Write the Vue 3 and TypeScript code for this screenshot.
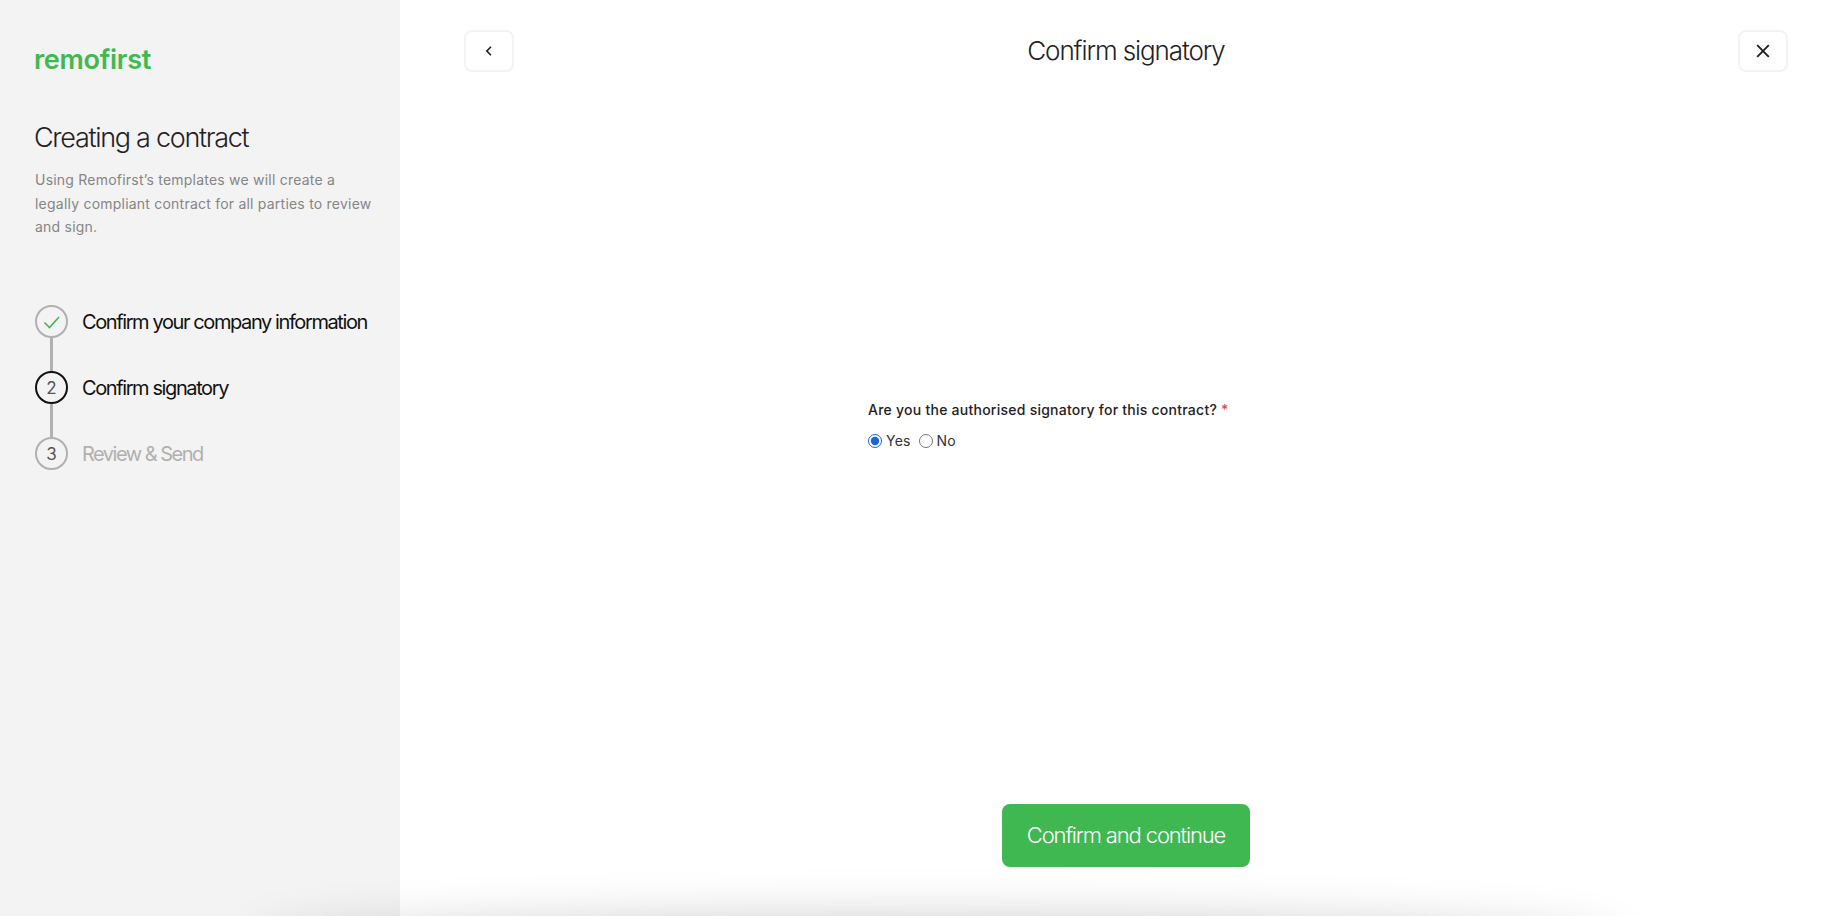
<script setup lang="ts">
	import { ref } from 'vue';

	interface Step {
		label: string;
		state: 'done' | 'active' | 'todo';
	}

	const steps: Step[] = [
		{ label: 'Confirm your company information', state: 'done' },
		{ label: 'Confirm signatory', state: 'active' },
		{ label: 'Review & Send', state: 'todo' }
	];

	const signatory = ref('yes');
</script>

<template>
	<div class="page">
		<aside class="sidebar">
			<div class="logo">remofirst</div>
			<h2 class="sidebar-title">Creating a contract</h2>
			<p class="sidebar-text">
				Using Remofirst’s templates we will create a legally compliant contract for all parties to review and sign.
			</p>
			<ol class="steps">
				<li
					v-for="(step, index) in steps"
					:key="step.label"
					:class="['step', `step-${step.state}`]">
					<span class="step-circle">
						<svg
							v-if="step.state === 'done'"
							width="18"
							height="18"
							viewBox="0 0 18 18"
							fill="none">
							<path
								d="M1.5 9.5 6.5 14.5 16 4"
								stroke="#3fb950"
								stroke-width="1.6" />
						</svg>
						<template v-else>{{ index + 1 }}</template>
					</span>
					<span class="step-label">{{ step.label }}</span>
				</li>
			</ol>
		</aside>

		<main class="main">
			<header class="header">
				<button
					class="icon-button"
					type="button"
					aria-label="Back">
					<svg
						width="16"
						height="16"
						viewBox="0 0 16 16"
						fill="none">
						<path
							d="M10 3.8 5.8 8l4.2 4.2"
							stroke="#1f2125"
							stroke-width="1.6" />
					</svg>
				</button>
				<h1 class="header-title">Confirm signatory</h1>
				<button
					class="icon-button"
					type="button"
					aria-label="Close">
					<svg
						width="16"
						height="16"
						viewBox="0 0 16 16"
						fill="none">
						<path
							d="M2.2 2.2 13.8 13.8M13.8 2.2 2.2 13.8"
							stroke="#1f2125"
							stroke-width="1.9" />
					</svg>
				</button>
			</header>

			<form class="form">
				<fieldset class="field">
					<legend class="field-label">
						Are you the authorised signatory for this contract? <span class="required">*</span>
					</legend>
					<div class="radios">
						<label class="radio">
							<input
								v-model="signatory"
								type="radio"
								name="signatory"
								value="yes" />
							Yes
						</label>
						<label class="radio">
							<input
								v-model="signatory"
								type="radio"
								name="signatory"
								value="no" />
							No
						</label>
					</div>
				</fieldset>
			</form>

			<footer class="footer">
				<button
					class="submit"
					type="button">
					Confirm and continue
				</button>
			</footer>
		</main>

		<div class="bottom-shadow" />
	</div>
</template>

<style>
	html,
	body {
		margin: 0;
		background: #fff;
	}
</style>

<style scoped>
	.page {
		position: relative;
		display: flex;
		overflow: hidden;
		height: 916px;
		font-family: Inter, 'Liberation Sans', sans-serif;
		color: #1f2125;
	}

	.sidebar {
		flex: 0 0 400px;
		box-sizing: border-box;
		min-width: 0;
		padding: 46px 20px 0 35px;
		background: #f3f3f3;
	}

	.logo {
		height: 28px;
		margin-left: -1px;
		font-size: 27px;
		font-weight: 600;
		line-height: 28px;
		letter-spacing: -0.3px;
		color: #3fb950;
	}

	.sidebar-title {
		margin: 47px 0 0 -1px;
		font-size: 27px;
		font-weight: 300;
		line-height: 34px;
		letter-spacing: -1.3px;
	}

	.sidebar-text {
		margin: 13px 0 0;
		font-size: 14px;
		line-height: 23.5px;
		letter-spacing: 0.22px;
		color: #858585;
	}

	.steps {
		margin: 66.5px 0 0;
		padding: 0;
		list-style: none;
	}

	.step {
		position: relative;
		display: flex;
		align-items: center;
		gap: 14px;
		height: 33px;
	}

	.step + .step {
		margin-top: 33px;
	}

	.step + .step::before {
		content: '';
		position: absolute;
		top: -33px;
		left: 15px;
		width: 3px;
		height: 33px;
		background: #b0b0b0;
	}

	.step-circle {
		display: flex;
		flex: 0 0 auto;
		align-items: center;
		justify-content: center;
		box-sizing: border-box;
		width: 33px;
		height: 33px;
		border: 2px solid #b0b0b0;
		border-radius: 50%;
		font-size: 17px;
		font-weight: 400;
		color: #555;
	}

	.step-active .step-circle {
		border-color: #111;
	}

	.step-label {
		font-size: 20px;
		font-weight: 400;
		letter-spacing: -1.4px;
		white-space: nowrap;
		color: #111;
	}

	.step-todo .step-label {
		letter-spacing: -1.5px;
		color: #b0b0b0;
	}

	.main {
		display: flex;
		flex: 1;
		flex-direction: column;
		box-sizing: border-box;
		padding: 30px 59px 49px 64px;
	}

	.header {
		display: flex;
		align-items: center;
		justify-content: space-between;
	}

	.header-title {
		margin: 0;
		padding-bottom: 2px;
		font-size: 26px;
		font-weight: 300;
		letter-spacing: -1.1px;
	}

	.icon-button {
		display: flex;
		align-items: center;
		justify-content: center;
		box-sizing: border-box;
		width: 50px;
		height: 42px;
		padding: 0;
		border: 2px solid #f3f3f3;
		border-radius: 8px;
		background: #fff;
	}

	.form {
		display: flex;
		flex: 1;
		align-items: center;
		justify-content: center;
		padding-bottom: 26px;
	}

	.field {
		box-sizing: border-box;
		width: 516px;
		margin: 0;
		padding: 0;
		border: 0;
	}

	.field-label {
		padding: 0;
		font-size: 14px;
		font-weight: 500;
		line-height: 20px;
		letter-spacing: 0.25px;
	}

	.required {
		color: #e5484d;
	}

	.radios {
		display: flex;
		gap: 8px;
		margin-top: 11px;
	}

	.radio {
		display: flex;
		align-items: center;
		gap: 4px;
		font-size: 14px;
		line-height: 20px;
		letter-spacing: 0.2px;
		color: #333;
	}

	.radio input {
		width: 14px;
		height: 14px;
		margin: 0;
		accent-color: #1a66d6;
	}

	.footer {
		display: flex;
		justify-content: center;
	}

	.submit {
		width: 248px;
		height: 63px;
		padding: 0 0 2px;
		border: 0;
		border-radius: 8px;
		background: #40b851;
		font-family: inherit;
		font-size: 22px;
		font-weight: 300;
		letter-spacing: -1.15px;
		color: #fff;
	}

	/* footer shadow coming up from below the fold */
	.bottom-shadow {
		position: absolute;
		top: 930px;
		left: 260px;
		width: 1350px;
		height: 40px;
		border-radius: 50%;
		box-shadow: 0 0 50px 10px rgb(0 0 0 / 22%);
	}
</style>
